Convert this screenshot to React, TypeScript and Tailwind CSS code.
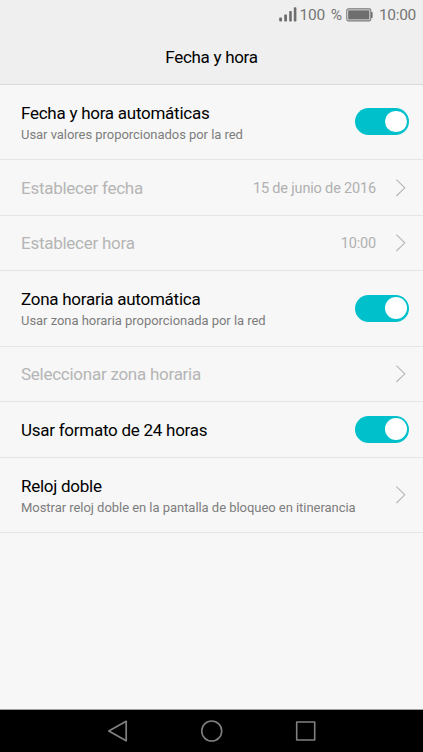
import React from 'react';
import clsx from 'clsx';

interface SettingItem {
  title: string;
  summary?: string;
  value?: string;
  control: 'switch' | 'link';
  disabled?: boolean;
  height: string;
}

const SETTINGS: SettingItem[] = [
  {
    title: 'Fecha y hora automáticas',
    summary: 'Usar valores proporcionados por la red',
    control: 'switch',
    height: 'h-[75px]',
  },
  { title: 'Establecer fecha', value: '15 de junio de 2016', control: 'link', disabled: true, height: 'h-14' },
  { title: 'Establecer hora', value: '10:00', control: 'link', disabled: true, height: 'h-[55px]' },
  {
    title: 'Zona horaria automática',
    summary: 'Usar zona horaria proporcionada por la red',
    control: 'switch',
    height: 'h-[76px]',
  },
  { title: 'Seleccionar zona horaria', control: 'link', disabled: true, height: 'h-[55px]' },
  { title: 'Usar formato de 24 horas', control: 'switch', height: 'h-14' },
  {
    title: 'Reloj doble',
    summary: 'Mostrar reloj doble en la pantalla de bloqueo en itinerancia',
    control: 'link',
    height: 'h-[75px]',
  },
];

const SignalIcon = () => (
  <svg width="18" height="15" viewBox="0 0 18 15" fill="#6e6e6e">
    <rect x="0.2" y="10.5" width="2.8" height="4" rx="0.8" />
    <rect x="5.2" y="7.5" width="2.8" height="7" rx="0.8" />
    <rect x="10.2" y="4" width="2.6" height="10.5" rx="0.8" />
    <rect x="14.8" y="0.2" width="2.6" height="14.3" rx="0.8" />
  </svg>
);

const BatteryIcon = () => (
  <svg width="27" height="14" viewBox="0 0 27 14" fill="none">
    <rect x="0.8" y="0.9" width="24" height="12" rx="1.6" stroke="#777" strokeWidth="1.1" />
    <rect x="2.2" y="2.3" width="21.2" height="9.2" fill="#6e6e6e" />
    <rect x="25" y="4" width="1.6" height="6" rx="0.6" fill="#6e6e6e" />
  </svg>
);

const Chevron = () => (
  <svg width="11" height="18" viewBox="0 0 11 18" fill="none" stroke="#b4b4b4" strokeWidth="1.05">
    <path d="M1.4 0.6L9.8 8.8L1.4 17" />
  </svg>
);

const Switch = () => (
  <button
    type="button"
    role="switch"
    aria-checked="true"
    className="flex h-[27px] w-[54px] shrink-0 items-center justify-end rounded-full bg-[#00c1cb] pr-[2.5px]"
  >
    <span className="size-[21.5px] rounded-full bg-white" />
  </button>
);

const SettingRow: React.FC<{ item: SettingItem }> = ({ item }) => (
  <li
    className={clsx(
      'flex items-center border-b border-[#e5e5e5] pl-[21px]',
      item.control === 'switch' ? 'pr-3.5 pb-px' : 'pr-[17px]',
      item.height
    )}
  >
    <div
      className={clsx(
        'flex-1 whitespace-nowrap',
        item.summary && 'pt-1',
        !item.summary && item.control === 'switch' && 'pt-px'
      )}
    >
      <p
        className={clsx(
          'text-[17px] leading-[22px] tracking-[-0.26px]',
          item.disabled ? 'text-[#b5b5b5]' : 'text-black'
        )}
      >
        {item.title}
      </p>
      {item.summary && (
        <p className="text-[13px] leading-[22px] tracking-[-0.04px] text-[#7d7d7d]">{item.summary}</p>
      )}
    </div>
    {item.value && (
      <span className="mr-[19px] pt-0.5 text-[14.5px] tracking-[-0.17px] text-[#b0b0b0]">{item.value}</span>
    )}
    {item.control === 'switch' ? <Switch /> : <Chevron />}
  </li>
);

const NavigationBar = () => (
  <nav className="flex h-[43px] items-center justify-center gap-[72px] border-t border-[#a0a0a0] bg-black">
    <svg width="22" height="22" viewBox="0 0 22 22" fill="none" stroke="#808080" strokeWidth="1.7" strokeLinejoin="round">
      <path d="M19.2 1.3V20.7L1.8 11Z" />
    </svg>
    <svg width="22" height="22" viewBox="0 0 22 22" fill="none" stroke="#808080" strokeWidth="1.6">
      <circle cx="10.7" cy="11" r="10" />
    </svg>
    <svg width="22" height="22" viewBox="0 0 22 22" fill="none" stroke="#808080" strokeWidth="1.6" strokeLinejoin="round">
      <rect x="1.7" y="2" width="18" height="18" />
    </svg>
  </nav>
);

export default function App() {
  return (
    <div className="flex h-[752px] w-[423px] flex-col overflow-hidden bg-[#f7f7f7] font-['Roboto',sans-serif]">
      <header className="h-[85px] border-b border-[#dadada] bg-[#efefef]">
        <div className="flex h-[29px] items-center justify-end pr-[7px] text-[15.5px] tracking-[-0.3px] text-[#757575]">
          <SignalIcon />
          <span className="ml-[3px] pt-0.5">100</span>
          <span className="ml-[6px] pt-0.5">%</span>
          <span className="ml-1">
            <BatteryIcon />
          </span>
          <span className="ml-1.5 pt-0.5">10:00</span>
        </div>
        <h1 className="text-center text-[17px] leading-[56px] tracking-[-0.3px] text-black">Fecha y hora</h1>
      </header>

      <ul className="flex-1">
        {SETTINGS.map((item) => (
          <SettingRow key={item.title} item={item} />
        ))}
      </ul>

      <NavigationBar />
    </div>
  );
}
